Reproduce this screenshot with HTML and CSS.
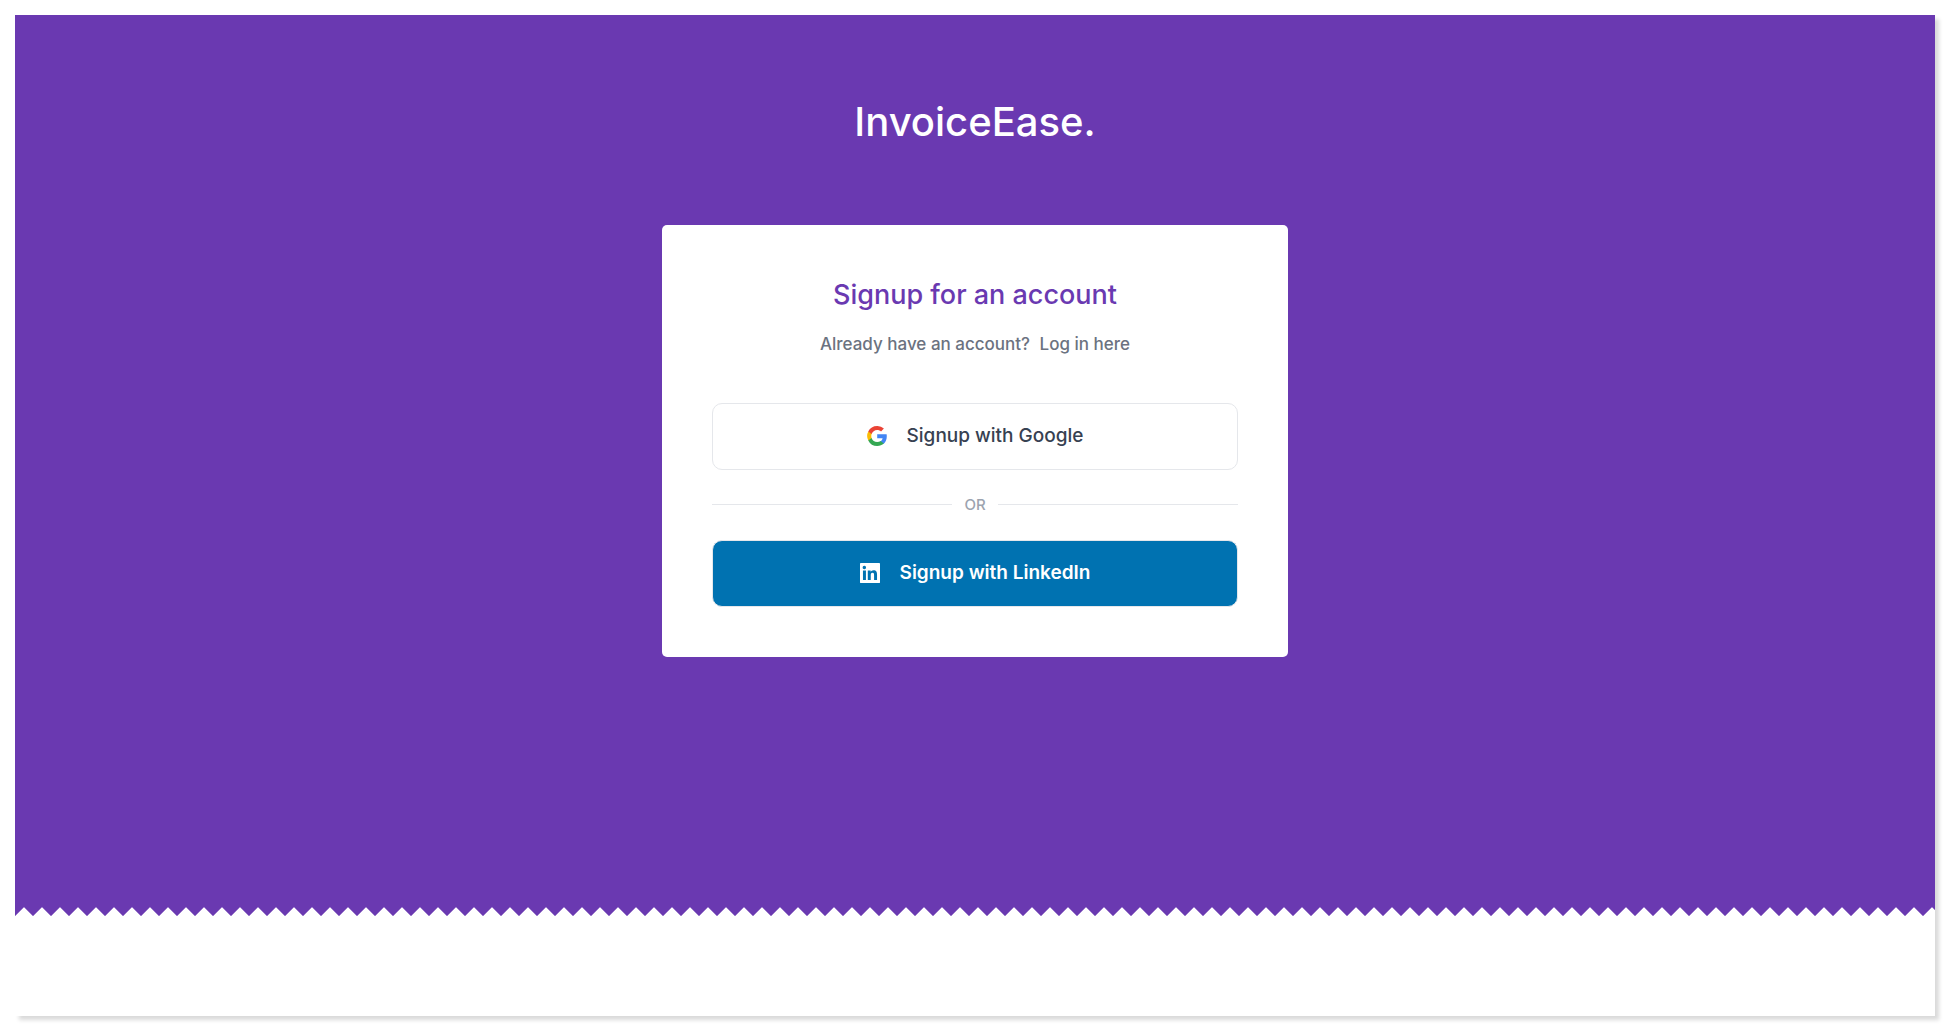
FILE: index.html
```html
<!DOCTYPE html>
<html lang="en">
<head>
  <meta charset="utf-8">
  <meta name="viewport" content="width=device-width, initial-scale=1">
  <title>InvoiceEase</title>
  <link rel="stylesheet" href="styles.css">
</head>
<body>
  <div class="sheet">
    <main class="hero">
      <h1 class="brand">InvoiceEase.</h1>
      <section class="card" aria-labelledby="signup-title">
        <h2 class="card-title" id="signup-title">Signup for an account</h2>
        <p class="card-note">Already have an account? <a class="login-link" href="#login">Log in here</a></p>
        <button class="provider provider-google" type="button">
          <svg class="provider-icon" viewBox="0 0 24 24" aria-hidden="true">
            <path fill="#4285F4" d="M23.75 12.27c0-.82-.07-1.6-.2-2.36H12.24v4.64h6.45c-.28 1.5-1.12 2.77-2.4 3.62v3h3.88c2.26-2.09 3.58-5.16 3.58-8.9z"/>
            <path fill="#34A853" d="M12.24 24c3.24 0 5.96-1.08 7.94-2.91l-3.88-3c-1.07.72-2.45 1.15-4.06 1.15-3.13 0-5.78-2.11-6.73-4.96H1.5v3.1A12 12 0 0 0 12.24 24z"/>
            <path fill="#FBBC05" d="M5.51 14.28a7.2 7.2 0 0 1 0-4.58V6.61H1.5a12 12 0 0 0 0 10.77z"/>
            <path fill="#EA4335" d="M12.24 4.75c1.77 0 3.35.61 4.6 1.8l3.44-3.44A11.5 11.5 0 0 0 12.24 0 12 12 0 0 0 1.5 6.61L5.51 9.7c.95-2.84 3.6-4.95 6.73-4.95z"/>
          </svg>
          <span>Signup with Google</span>
        </button>
        <div class="divider">OR</div>
        <button class="provider provider-linkedin" type="button">
          <svg class="provider-icon" viewBox="0 0 24 24" aria-hidden="true">
            <path fill="currentColor" fill-rule="evenodd" d="M1 0h22a1 1 0 0 1 1 1v22a1 1 0 0 1-1 1H1a1 1 0 0 1-1-1V1a1 1 0 0 1 1-1zM3.56 9v11.45h3.56V9zM5.34 3.3a2.07 2.07 0 1 0 0 4.13 2.07 2.07 0 0 0 0-4.13zM9.35 9v11.45h3.55v-5.67c0-1.5.28-2.95 2.14-2.95 1.83 0 1.85 1.71 1.85 3.05v5.57h3.56v-6.28c0-3.08-.66-5.45-4.26-5.45-1.73 0-2.89.95-3.37 1.85h-.05V9z"/>
          </svg>
          <span>Signup with LinkedIn</span>
        </button>
      </section>
    </main>
    <div class="torn-edge"></div>
  </div>
</body>
</html>
```
FILE: styles.css
```css
:root {
  --purple: #6a39b1;
  --line: #e5e7eb;
}

* {
  box-sizing: border-box;
}

body {
  display: flex;
  min-height: 100vh;
  margin: 0;
  padding: 15px;
  background: #fff;
  font-family: Inter, "Liberation Sans", sans-serif;
}

.sheet {
  display: flex;
  flex: 1;
  flex-direction: column;
  padding-bottom: 100px;
  background: #fff;
  box-shadow: 4px 4px 4px rgb(0 0 0 / 15%);
}

.hero {
  display: flex;
  flex: 1;
  flex-direction: column;
  align-items: center;
  padding: 77px 20px 60px;
  background: var(--purple);
}

/* Sawtooth strip along the bottom of the hero */
.torn-edge {
  height: 9px;
  background:
    linear-gradient(135deg, var(--purple) 6px, transparent 7px) 0 0 / 18px 9px repeat-x,
    linear-gradient(225deg, var(--purple) 6px, transparent 7px) 0 0 / 18px 9px repeat-x;
}

.brand {
  margin: 0 0 73px;
  color: #fff;
  font-size: 40px;
  font-weight: 500;
  line-height: 60px;
}

.card {
  width: 100%;
  max-width: 626px;
  padding: 50px;
  border-radius: 5px;
  background: #fff;
  text-align: center;
}

.card-title {
  margin: 0;
  color: var(--purple);
  font-size: 27px;
  font-weight: 500;
  line-height: 40px;
}

.card-note {
  margin: 16px 0 46px;
  color: #6b7280;
  font-size: 17px;
  font-weight: 500;
  line-height: 26px;
}

.login-link {
  margin-left: 5px;
  color: inherit;
  text-decoration: none;
}

.provider {
  display: flex;
  align-items: center;
  justify-content: center;
  gap: 20px;
  width: 100%;
  height: 67px;
  padding: 0 0 1px;
  border: 1px solid var(--line);
  border-radius: 10px;
  font: 500 19px/30px Inter, "Liberation Sans", sans-serif;
  cursor: pointer;
}

.provider-google {
  background: #fff;
  color: #374151;
}

.provider-linkedin {
  background: #0072b1;
  color: #fff;
  font-weight: 600;
}

.provider-icon {
  width: 20px;
  height: 20px;
}

.divider {
  display: flex;
  align-items: center;
  gap: 12px;
  height: 70px;
  padding-bottom: 1px;
  color: #9ca3af;
  font-size: 15px;
  font-weight: 500;
}

.divider::before,
.divider::after {
  content: "";
  flex: 1;
  height: 1px;
  background: var(--line);
}
```
